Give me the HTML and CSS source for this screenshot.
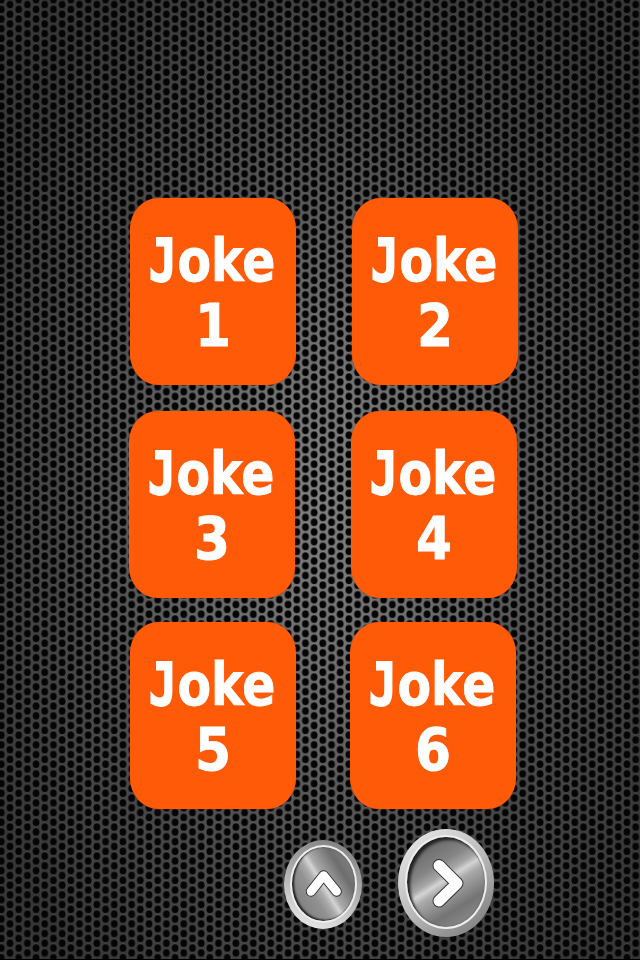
FILE: index.html
```
<!DOCTYPE html>
<html lang="en">
<head>
<meta charset="utf-8">
<title>Jokes</title>
<link rel="stylesheet" href="styles.css">
</head>
<body>
<main class="screen">
  <svg class="mesh" width="640" height="960" aria-hidden="true">
    <defs>
      <radialGradient id="light" gradientUnits="userSpaceOnUse" cx="0" cy="0" r="1" gradientTransform="translate(325 500) scale(390 600)">
        <stop offset="0" stop-color="#808080"/><stop offset=".3" stop-color="#6b6b6b"/><stop offset=".65" stop-color="#484848"/><stop offset="1" stop-color="#343434"/>
      </radialGradient>
      <pattern id="holes" patternUnits="userSpaceOnUse" x="1.3" y="-.5" width="17.38" height="9.677">
        <g fill="none" stroke="#fff" stroke-opacity=".1" stroke-width=".8">
          <ellipse cx="8.69" cy="5" rx="3.9" ry="4.1"/><ellipse cx="0" cy="0.16" rx="3.9" ry="4.1"/><ellipse cx="17.38" cy="0.16" rx="3.9" ry="4.1"/><ellipse cx="0" cy="9.84" rx="3.9" ry="4.1"/><ellipse cx="17.38" cy="9.84" rx="3.9" ry="4.1"/>
        </g>
        <g fill="#050505" stroke="#000" stroke-opacity=".4" stroke-width="1">
          <ellipse cx="8.69" cy="5" rx="3.2" ry="3.6"/><ellipse cx="0" cy="0.16" rx="3.2" ry="3.6"/><ellipse cx="17.38" cy="0.16" rx="3.2" ry="3.6"/><ellipse cx="0" cy="9.84" rx="3.2" ry="3.6"/><ellipse cx="17.38" cy="9.84" rx="3.2" ry="3.6"/>
        </g>
      </pattern>
    </defs>
    <rect width="640" height="960" fill="url(#light)"/>
    <rect width="640" height="960" fill="url(#holes)"/>
    <rect y="959" width="640" height="1" fill="#000"/>
  </svg>

  <section class="jokes">
    <button class="joke"><svg viewBox="0 0 166 187"><text y="83"><tspan class="j" x="18.7" textLength="28" lengthAdjust="spacingAndGlyphs">J</tspan><tspan x="47.5" textLength="98" lengthAdjust="spacingAndGlyphs">oke</tspan></text><text x="65" y="147.5" textLength="36" lengthAdjust="spacingAndGlyphs">1</text></svg></button>
    <button class="joke"><svg viewBox="0 0 166 187"><text y="83"><tspan class="j" x="18.7" textLength="28" lengthAdjust="spacingAndGlyphs">J</tspan><tspan x="47.5" textLength="98" lengthAdjust="spacingAndGlyphs">oke</tspan></text><text x="65" y="147.5" textLength="36" lengthAdjust="spacingAndGlyphs">2</text></svg></button>
    <button class="joke left"><svg viewBox="0 0 166 187"><text y="83"><tspan class="j" x="18.7" textLength="28" lengthAdjust="spacingAndGlyphs">J</tspan><tspan x="47.5" textLength="98" lengthAdjust="spacingAndGlyphs">oke</tspan></text><text x="65" y="147.5" textLength="36" lengthAdjust="spacingAndGlyphs">3</text></svg></button>
    <button class="joke left"><svg viewBox="0 0 166 187"><text y="83"><tspan class="j" x="18.7" textLength="28" lengthAdjust="spacingAndGlyphs">J</tspan><tspan x="47.5" textLength="98" lengthAdjust="spacingAndGlyphs">oke</tspan></text><text x="65" y="147.5" textLength="36" lengthAdjust="spacingAndGlyphs">4</text></svg></button>
    <button class="joke"><svg viewBox="0 0 166 187"><text y="83"><tspan class="j" x="18.7" textLength="28" lengthAdjust="spacingAndGlyphs">J</tspan><tspan x="47.5" textLength="98" lengthAdjust="spacingAndGlyphs">oke</tspan></text><text x="65" y="147.5" textLength="36" lengthAdjust="spacingAndGlyphs">5</text></svg></button>
    <button class="joke last"><svg viewBox="0 0 166 187"><text y="83"><tspan class="j" x="18.7" textLength="28" lengthAdjust="spacingAndGlyphs">J</tspan><tspan x="47.5" textLength="98" lengthAdjust="spacingAndGlyphs">oke</tspan></text><text x="65" y="147.5" textLength="36" lengthAdjust="spacingAndGlyphs">6</text></svg></button>
  </section>

  <nav class="controls">
    <button class="round up" aria-label="Up">
      <span class="face"></span>
      <svg viewBox="0 0 78 89"><path class="edge" d="M27 51.5 39.6 35.5 52.6 51.5"/><path class="arrow" d="M27 51.5 39.6 35.5 52.6 51.5"/></svg>
    </button>
    <button class="round next" aria-label="Next">
      <span class="face"></span>
      <svg viewBox="0 0 96 108"><path class="edge" d="M41 36.5 59 54.3 41 72"/><path class="arrow" d="M41 36.5 59 54.3 41 72"/></svg>
    </button>
  </nav>
</main>
</body>
</html>
```
FILE: styles.css
```
* { box-sizing: border-box; }
body { margin: 0; background: #222; }
button { padding: 0; border: 0; background: none; display: block; }

.screen {
  position: relative;
  width: 640px;
  height: 960px;
  overflow: hidden;
  padding-top: 198px;
}
.mesh { position: absolute; inset: 0; z-index: -1; }

.jokes {
  display: grid;
  grid-template-columns: 166px 166px;
  grid-template-rows: 187px 187px 187px;
  column-gap: 56px;
  row-gap: 25px;
  margin-left: 130px;
}
.joke {
  width: 166px;
  height: 187px;
  border-radius: 29px / 31px;
  background: #ff5a08;
  box-shadow: 0 0 1px #a63a05;
}
.joke.left { margin: 1px 0 0 -1px; }
.joke.last { margin-left: -2.5px; }
.joke svg { display: block; width: 166px; height: 187px; }
.joke text {
  font: bold 59px "DejaVu Sans", sans-serif;
  fill: #fff;
  stroke: #fff;
  stroke-width: .9;
}
.joke .j { font-family: "DejaVu Sans Mono", monospace; stroke-width: 1.8; }

.controls {
  display: flex;
  align-items: center;
  gap: 36px;
  margin: 20px 0 0 284px;
}
.round {
  position: relative;
  border-radius: 50%;
  display: grid;
}
.round > * { grid-area: 1 / 1; }
.round svg { position: relative; width: 100%; height: 100%; }
.up {
  width: 78px;
  height: 89px;
  margin-top: 3px;
  background: linear-gradient(200deg, #858585 10%, #aaa 45%, #e4e4e4 90%);
}
.next {
  width: 96px;
  height: 108px;
  background: linear-gradient(140deg, #e2e2e2 12%, #bbb 50%, #888 85%);
}
.face { border-radius: 50%; }
.up .face {
  margin: 5px 5px 6px 6px;
  border: 2px solid #eee;
  background: linear-gradient(58deg, #777 5%, #929292 35%, #aaa 43%, #d4d4d4 49%, #aaa 54%, #6e6e6e 74%, #909090 100%);
  box-shadow: inset 2px -1px 2px #222, inset 0 0 2px #555;
}
.next .face {
  margin: 6px 7px 8px;
  border: 2px solid #eee;
  background: linear-gradient(148deg, #606060 8%, #858585 34%, #a6a6a6 43%, #d4d4d4 48%, #aaa 54%, #747474 74%, #999 100%);
  box-shadow: inset 3px 3px 3px #222, inset 0 0 2px #555;
}
.edge, .arrow { fill: none; stroke-linecap: round; stroke-linejoin: round; }
.edge { stroke: #333; stroke-width: 10.5; }
.arrow { stroke: #fff; stroke-width: 8.6; }
.next .edge { stroke-width: 13; }
.next .arrow { stroke-width: 11; }
```
